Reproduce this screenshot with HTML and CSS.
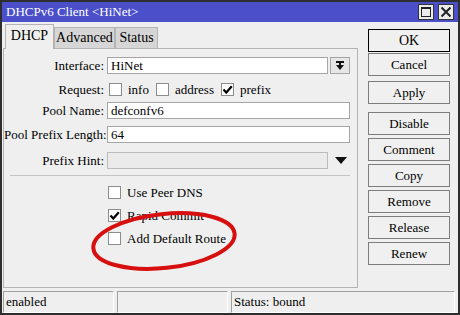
FILE: index.html
```html
<!DOCTYPE html>
<html>
<head>
    <title>DHCPv6 Client</title>
    <meta charset="UTF-8">
<link rel="stylesheet" href="styles.css">
</head>
<body>
<div class="window">
    <div class="titlebar">
        <span class="title">DHCPv6 Client &lt;HiNet&gt;</span>
        <div class="win-btns">
            <span class="win-btn">
                <svg width="12" height="12" viewBox="0 0 12 12"><rect x="1.5" y="1.5" width="9" height="9" fill="none" stroke="#222" stroke-width="1"/><line x1="1" y1="2" x2="11" y2="2" stroke="#222" stroke-width="2"/></svg>
            </span>
            <span class="win-btn">
                <svg width="12" height="12" viewBox="0 0 12 12"><path d="M1.5 1.5 L10.5 10.5 M10.5 1.5 L1.5 10.5" stroke="#222" stroke-width="2"/></svg>
            </span>
        </div>
    </div>

    <div class="main">
        <div class="left">
            <div class="tabs">
                <div class="tab active tab-dhcp">DHCP</div>
                <div class="tab tab-adv">Advanced</div>
                <div class="tab tab-status">Status</div>
            </div>
            <div class="panel">
                <div class="row first">
                    <label class="lbl">Interface:</label>
                    <div class="field">HiNet</div>
                    <div class="drop-btn">
                        <svg width="10" height="10" viewBox="0 0 10 10"><rect x="1" y="0" width="8" height="2" fill="#111"/><path d="M1 4 H9 L5 9 Z" fill="#111"/><rect x="4" y="2" width="2" height="3" fill="#111"/></svg>
                    </div>
                </div>
                <div class="row">
                    <label class="lbl">Request:</label>
                    <div class="opts">
                        <span class="opt"><span class="box"></span>info</span>
                        <span class="opt"><span class="box"></span>address</span>
                        <span class="opt"><span class="box"><svg width="11" height="11" viewBox="0 0 11 11"><path d="M1.5 5.5 L4.3 8.5 L9.8 2.3" fill="none" stroke="#000" stroke-width="2.2"/></svg></span>prefix</span>
                    </div>
                </div>
                <div class="row tight">
                    <label class="lbl">Pool Name:</label>
                    <div class="field">defconfv6</div>
                </div>
                <div class="row">
                    <label class="lbl">Pool Prefix Length:</label>
                    <div class="field">64</div>
                </div>
                <div class="row loose">
                    <label class="lbl">Prefix Hint:</label>
                    <div class="field disabled"></div>
                    <svg class="hint-arrow" width="12" height="7" viewBox="0 0 12 7"><path d="M0 0 H12 L6 7 Z" fill="#111"/></svg>
                </div>

                <div class="sep"></div>

                <div class="checks">
                    <div class="check-row"><span class="box"></span>Use Peer DNS</div>
                    <div class="check-row"><span class="box"><svg width="11" height="11" viewBox="0 0 11 11"><path d="M1.5 5.5 L4.3 8.5 L9.8 2.3" fill="none" stroke="#000" stroke-width="2.2"/></svg></span>Rapid Commit</div>
                    <div class="check-row"><span class="box"></span>Add Default Route</div>
                </div>
            </div>
        </div>

        <div class="actions">
            <div class="btn default">OK</div>
            <div class="btn next">Cancel</div>
            <div class="btn apply">Apply</div>
            <div class="btn group">Disable</div>
            <div class="btn">Comment</div>
            <div class="btn">Copy</div>
            <div class="btn">Remove</div>
            <div class="btn">Release</div>
            <div class="btn">Renew</div>
        </div>
    </div>

    <div class="statusbar">
        <div class="status-field small">enabled</div>
        <div class="status-field small"></div>
        <div class="status-field wide">Status: bound</div>
    </div>

    <svg class="mark" width="460" height="315" viewBox="0 0 460 315">
        <ellipse cx="164" cy="241" rx="71" ry="27" transform="rotate(-6 164 241)" fill="none" stroke="#d70f0f" stroke-width="4"/>
    </svg>
</div>
</body>
</html>
```

FILE: styles.css
```css
* {
  box-sizing: border-box;
  font-family: "Liberation Serif", "DejaVu Serif", serif;
}

body {
  margin: 0;
  font-size: 13px;
  color: #000;
}

/* Window frame */
.window {
  position: relative;
  width: 460px;
  height: 315px;
  border: 2px solid #2e2e2e;
  background-color: #efefef;
  display: flex;
  flex-direction: column;
}

.titlebar {
  height: 20px;
  flex: none;
  background-color: #4b4fca;
  color: #fff;
  display: flex;
  align-items: center;
  justify-content: space-between;
  padding: 0 4px 0 4px;
}

.title {
  font-size: 13px;
}

.win-btns {
  display: flex;
  gap: 4px;
}

.win-btn {
  width: 16px;
  height: 16px;
  background-color: #ececec;
  border: 1px solid #333;
  display: flex;
  align-items: center;
  justify-content: center;
}

/* Main area */
.main {
  height: 267px;
  flex: none;
  display: flex;
  gap: 10px;
  padding-left: 1px;
}

.left {
  width: 355px;
  display: flex;
  flex-direction: column;
}

/* Tabs */
.tabs {
  height: 26px;
  display: flex;
  align-items: flex-end;
  padding-left: 2px;
}

.tab {
  height: 21px;
  background-color: #d6d6d6;
  border: 1px solid #b4b4b4;
  border-bottom: none;
  text-align: center;
  line-height: 20px;
  font-size: 14px;
}

.tab.active {
  height: 25px;
  margin-bottom: -1px;
  background-color: #efefef;
  position: relative;
  z-index: 1;
  line-height: 22px;
}

.tab-dhcp { width: 49px; }
.tab-adv { width: 61px; }
.tab-status { width: 43px; }

.panel {
  height: 240px;
  border: 1px solid #b4b4b4;
  padding: 8px 7px 0 0;
}

/* Form rows */
.row {
  display: flex;
  align-items: center;
  height: 17px;
  margin-top: 7px;
}

.row.first { margin-top: 0; }
.row.tight { margin-top: 4px; }
.row.loose { margin-top: 9px; }

.lbl {
  width: 100px;
  margin-right: 3px;
  text-align: right;
  white-space: nowrap;
}

.field {
  flex: 1;
  height: 17px;
  background-color: #fff;
  border: 1px solid #a5a5a5;
  padding: 0 3px;
  line-height: 15px;
}

.field.disabled {
  background-color: #ebebeb;
  border-color: #bcbcbc;
}

.drop-btn {
  width: 20px;
  height: 17px;
  margin-left: 2px;
  background-color: #e6e6e6;
  border: 1px solid #a5a5a5;
  display: flex;
  align-items: center;
  justify-content: center;
}

.hint-arrow {
  margin: 0 3px 1px 7px;
}

.opts {
  display: flex;
  align-items: center;
  padding-left: 2px;
}

.opt {
  display: flex;
  align-items: center;
  margin-right: 7px;
}

/* Checkboxes */
.box {
  width: 13px;
  height: 13px;
  flex: none;
  margin-right: 6px;
  background-color: #fff;
  border: 1px solid #8c8c8c;
  display: flex;
  align-items: center;
  justify-content: center;
}

.sep {
  height: 1px;
  margin: 6px 0 0 6px;
  background-color: #c4c4c4;
}

.checks {
  padding-left: 104px;
}

.check-row {
  display: flex;
  align-items: center;
  height: 13px;
  margin-top: 10px;
}

/* Right hand buttons */
.actions {
  width: 82px;
  padding-top: 7px;
  display: flex;
  flex-direction: column;
}

.btn {
  height: 23px;
  flex: none;
  margin-top: 3px;
  background-color: #f0f0f0;
  border: 1px solid #7d7d7d;
  text-align: center;
  line-height: 21px;
}

.btn.default {
  margin-top: 0;
  border-color: #000;
  font-size: 14px;
}

.btn.next { margin-top: 1px; }
.btn.apply { margin-top: 5px; }
.btn.group { margin-top: 8px; }

/* Status bar */
.statusbar {
  height: 24px;
  flex: none;
  display: flex;
  gap: 3px;
  padding: 2px 3px 0 1px;
}

.status-field {
  border: 1px solid;
  border-color: #a0a0a0 #fff #fff #a0a0a0;
  padding-left: 2px;
  line-height: 20px;
}

.status-field.small { width: 111px; }
.status-field.wide { flex: 1; }

/* Red annotation */
.mark {
  position: absolute;
  left: -2px;
  top: -2px;
  pointer-events: none;
}
```
